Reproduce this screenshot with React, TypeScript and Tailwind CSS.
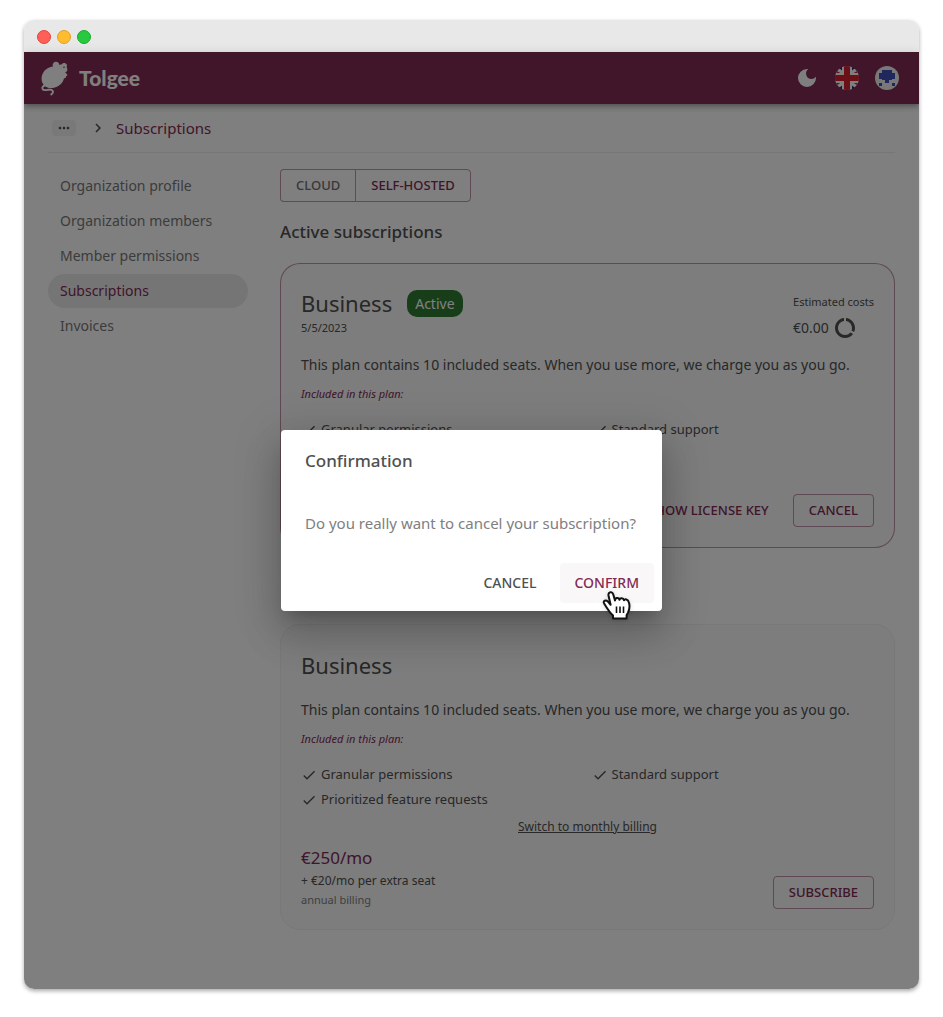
import type { ReactNode } from "react";
import { MdCheck, MdDarkMode, MdDataUsage, MdMoreHoriz, MdNavigateNext } from "react-icons/md";

const NAV_ITEMS = [
  "Organization profile",
  "Organization members",
  "Member permissions",
  "Subscriptions",
  "Invoices",
];

const ACTIVE_FEATURES = ["Granular permissions", "Standard support"];
const PLAN_FEATURES = [...ACTIVE_FEATURES, "Prioritized feature requests"];

function MouseLogo() {
  return (
    <svg viewBox="0 0 28 36" className="h-9 w-7" aria-hidden="true">
      <path
        d="M1.600 19.500C1.200 13 6 7.400 13 6.600C12 4 13.800 1.800 16 1.800C18 1.800 19.300 3.200 19.400 5C20.400 4.400 21.200 4.200 22 4.200C22.600 3.100 24.300 2.800 25.600 3.400C27 4 27.400 5.400 26.600 6.700C27.300 8.300 27.600 10 27 11C26.300 11.900 25.800 12.100 25.200 12.500C25.600 13.300 26.800 13.400 27.200 14.500C27.500 15.500 26.900 16.200 26 16.200C26.300 17.600 25.300 18.400 24 18.200C23 23 18.800 27 12.800 28C7 28.900 2 25.500 1.600 19.500Z"
        fill="#fff"
      />
      <circle cx="24" cy="7.200" r="0.800" fill="#822b55" />
      <path
        d="M5 25.500C3.200 25.900 2 27.200 2.400 28.600C3.200 31 6 30.200 8.200 29.800C10.500 29.400 12.800 29.800 13 31.700C13.100 32.900 12.300 33.700 11.200 34.500"
        fill="none"
        stroke="#fff"
        strokeWidth="1.900"
        strokeLinecap="round"
      />
    </svg>
  );
}

function BritishFlag() {
  return (
    <svg viewBox="0 0 24 24" className="size-6" aria-hidden="true">
      <defs>
        <clipPath id="flag-circle">
          <circle cx="12" cy="12" r="12" />
        </clipPath>
      </defs>
      <g clipPath="url(#flag-circle)">
        <path d="M0 0h24v24H0z" fill="#1b2f78" />
        <path d="M0 3 24 21M0 21 24 3" stroke="#fff" strokeWidth="6" />
        <path
          d="M1 5.500 9 10M23 5.500 15 10M1 18.500 9 14M23 18.500 15 14"
          stroke="#d5202c"
          strokeWidth="1.800"
        />
        <path d="M7 0h10v24H7zM0 7h24v10H0z" fill="#fff" />
        <path d="M9 0h6v24H9zM0 9h24v6H0z" fill="#d5202c" />
      </g>
    </svg>
  );
}

function Avatar() {
  return (
    <svg viewBox="0 0 24 24" className="size-6" aria-hidden="true">
      <circle cx="12" cy="12" r="12" fill="#f0f0f0" />
      <path
        d="M7 4h10v3h3v6h-3v1h-3v3h-4v-3H7v-1H4V7h3zM4 17h3v3H4zM17 17h3v3h-3z"
        fill="#3f4fb8"
      />
    </svg>
  );
}

function HandCursor() {
  return (
    <svg
      viewBox="0 0 30 32"
      className="pointer-events-none absolute top-[26px] left-[42px] h-8 w-[30px] drop-shadow-sm"
      aria-hidden="true"
    >
      <path
        d="M8.600 15.800 6.500 6.500C5.900 3 10.200 2 11.200 5.200L13 11.500C13.200 8.600 16.600 8.200 17.500 10.800C18 8.700 21.300 8.700 22 11.300C22.800 9.700 25.800 10.100 26.600 12.600C28 16 27.600 20 26 23.600L24.600 26.300V29.500H11V26.600C8.500 24.300 6.500 21.500 4.600 18.500L2 14.200C1 12 3.700 10.500 5.800 12.400Z"
        fill="#fff"
        stroke="#111"
        strokeWidth="2"
        strokeLinejoin="round"
      />
      <path d="M14.500 17.500v6.500M18 17.500v6.500M21.500 17.500v6.500" stroke="#111" strokeWidth="1.600" />
    </svg>
  );
}

function OutlinedButton({ children }: { children: ReactNode }) {
  return (
    <button
      type="button"
      className="h-[33px] rounded border border-[#822b55]/50 px-[15px] text-[13px] font-medium text-[#822b55]"
    >
      {children}
    </button>
  );
}

function PlanDetails({ features }: { features: string[] }) {
  return (
    <>
      <p className="text-sm leading-6">
        This plan contains 10 included seats. When you use more, we charge you as you go.
      </p>
      <p className="mt-2 text-[11px] leading-[18px] text-[#822b55] italic">Included in this plan:</p>
      <ul className="mt-[14px] grid grid-cols-2 gap-x-2 text-[13px] leading-[25px]">
        {features.map((feature) => (
          <li key={feature} className="flex items-center gap-1">
            <MdCheck className="size-4 shrink-0" />
            {feature}
          </li>
        ))}
      </ul>
    </>
  );
}

function AppHeader() {
  return (
    <header className="relative flex h-[52px] items-center justify-between bg-[#822b55] px-4 text-white shadow-[0_2px_4px_-1px_rgba(0,0,0,0.2),0_4px_5px_rgba(0,0,0,0.14),0_1px_10px_rgba(0,0,0,0.12)]">
      <a href="#home" className="flex items-center gap-[11px]">
        <MouseLogo />
        <span className="font-['Lato',sans-serif] text-[21px] font-black">Tolgee</span>
      </a>
      <div className="flex items-center gap-4 pr-1">
        <button type="button" aria-label="Dark mode">
          <MdDarkMode className="size-6" />
        </button>
        <button type="button" aria-label="Language">
          <BritishFlag />
        </button>
        <button type="button" aria-label="Account">
          <Avatar />
        </button>
      </div>
    </header>
  );
}

function ConfirmationDialog() {
  return (
    <div className="absolute inset-0 grid place-items-center bg-black/50">
      <div
        role="dialog"
        aria-modal="true"
        aria-labelledby="dialog-title"
        className="w-[381px] max-w-full rounded bg-white shadow-[0_11px_15px_-7px_rgba(0,0,0,0.2),0_24px_38px_3px_rgba(0,0,0,0.14),0_9px_46px_8px_rgba(0,0,0,0.12)]"
      >
        <h2 id="dialog-title" className="px-6 py-4 text-[17px] leading-[30px] font-medium">
          Confirmation
        </h2>
        <p className="px-6 py-5 text-[15px] leading-[23px] text-[#808080]">
          Do you really want to cancel your subscription?
        </p>
        <div className="flex justify-end gap-2 p-2 text-sm font-medium">
          <button type="button" className="h-10 rounded px-[15px]">
            CANCEL
          </button>
          <button
            type="button"
            className="relative h-10 rounded bg-[#822b55]/4 px-[15px] text-[#822b55]"
          >
            CONFIRM
            <HandCursor />
          </button>
        </div>
      </div>
    </div>
  );
}

export default function App() {
  return (
    <div className="min-h-screen bg-white px-6 pt-5 pb-7 font-['Noto_Sans',sans-serif] text-[#505050]">
      <div className="overflow-hidden rounded-[10px] shadow-[0_2px_4px_rgba(0,0,0,0.35)]">
        <div className="flex h-8 items-center gap-1.5 bg-[#e8e8e8] px-[13px] pt-0.5">
          <span className="size-[14px] rounded-full border border-[#e0443e] bg-[#ff5f57]" />
          <span className="size-[14px] rounded-full border border-[#dea123] bg-[#febc2e]" />
          <span className="size-[14px] rounded-full border border-[#1aab29] bg-[#28c840]" />
        </div>
        <div className="relative bg-white">
          <AppHeader />
          <div className="px-6 pb-[59px]">
            <nav
              aria-label="Breadcrumb"
              className="flex h-[49px] items-center border-b border-[#ececec] pl-1 text-[15px]"
            >
              <button
                type="button"
                aria-label="Show path"
                className="flex h-4 w-6 items-center justify-center rounded-sm bg-[#f2f2f2]"
              >
                <MdMoreHoriz className="size-4" />
              </button>
              <MdNavigateNext className="mr-[9px] ml-[13px] size-[18px]" />
              <a href="#subscriptions" className="text-[#822b55]">
                Subscriptions
              </a>
            </nav>
            <div className="flex gap-8 pt-4">
              <nav aria-label="Organization" className="w-[200px] shrink-0">
                <ul className="flex flex-col gap-px text-sm text-[#787878]">
                  {NAV_ITEMS.map((item) => (
                    <li key={item}>
                      <a
                        href="#settings"
                        className={
                          item === "Subscriptions"
                            ? "flex h-[34px] items-center rounded-full bg-[#ebebeb] px-3 text-[#822b55]"
                            : "flex h-[34px] items-center rounded-full px-3"
                        }
                      >
                        {item}
                      </a>
                    </li>
                  ))}
                </ul>
              </nav>
              <main className="min-w-0 flex-1">
                <div className="flex h-[33px] text-[13px] font-medium">
                  <button
                    type="button"
                    className="rounded-l border border-r-0 border-[#822b55]/50 px-[15px] text-[#707070]"
                  >
                    CLOUD
                  </button>
                  <button
                    type="button"
                    className="rounded-r border border-[#822b55]/50 px-[15px] text-[#822b55]"
                  >
                    SELF-HOSTED
                  </button>
                </div>
                <h2 className="mt-[15px] text-[17px] leading-[30px] font-medium">
                  Active subscriptions
                </h2>

                <section className="mt-4 rounded-[20px] border border-[#822b55]/50 bg-[#fafafa] p-5">
                  <div className="mb-[13px] flex items-start justify-between">
                    <div>
                      <div className="flex h-[38px] items-center gap-[15px]">
                        <h3 className="text-[22px] leading-9">Business</h3>
                        <span className="rounded-[10px] bg-[#2e7d32] px-2 text-sm leading-[27px] text-white">
                          Active
                        </span>
                      </div>
                      <p className="text-[11px] leading-3">5/5/2023</p>
                    </div>
                    <div className="pt-2">
                      <p className="text-[11px] leading-5">Estimated costs</p>
                      <p className="flex items-center gap-1 pt-1 text-sm leading-6">
                        €0.00
                        <MdDataUsage className="size-6" />
                      </p>
                    </div>
                  </div>
                  <PlanDetails features={ACTIVE_FEATURES} />
                  <div className="mt-[52px] flex items-center justify-end gap-6">
                    <button type="button" className="text-[13px] font-medium text-[#822b55]">
                      SHOW LICENSE KEY
                    </button>
                    <OutlinedButton>CANCEL</OutlinedButton>
                  </div>
                </section>

                <section className="mt-[76px] rounded-[20px] border border-[#f0f0f0] bg-[#fafafa] p-5">
                  <h3 className="mb-[13px] text-[22px] leading-10">Business</h3>
                  <PlanDetails features={PLAN_FEATURES} />
                  <div className="mt-1 text-center text-xs leading-[22px]">
                    <button type="button" className="underline">
                      Switch to monthly billing
                    </button>
                  </div>
                  <div className="mt-2 flex items-end justify-between">
                    <div>
                      <p className="text-[17px] leading-6 text-[#822b55]">€250/mo</p>
                      <p className="text-xs leading-[21px]">+ €20/mo per extra seat</p>
                      <p className="text-[11px] leading-[18px] text-[#808080]">annual billing</p>
                    </div>
                    <OutlinedButton>SUBSCRIBE</OutlinedButton>
                  </div>
                </section>
              </main>
            </div>
          </div>
          <ConfirmationDialog />
        </div>
      </div>
    </div>
  );
}
